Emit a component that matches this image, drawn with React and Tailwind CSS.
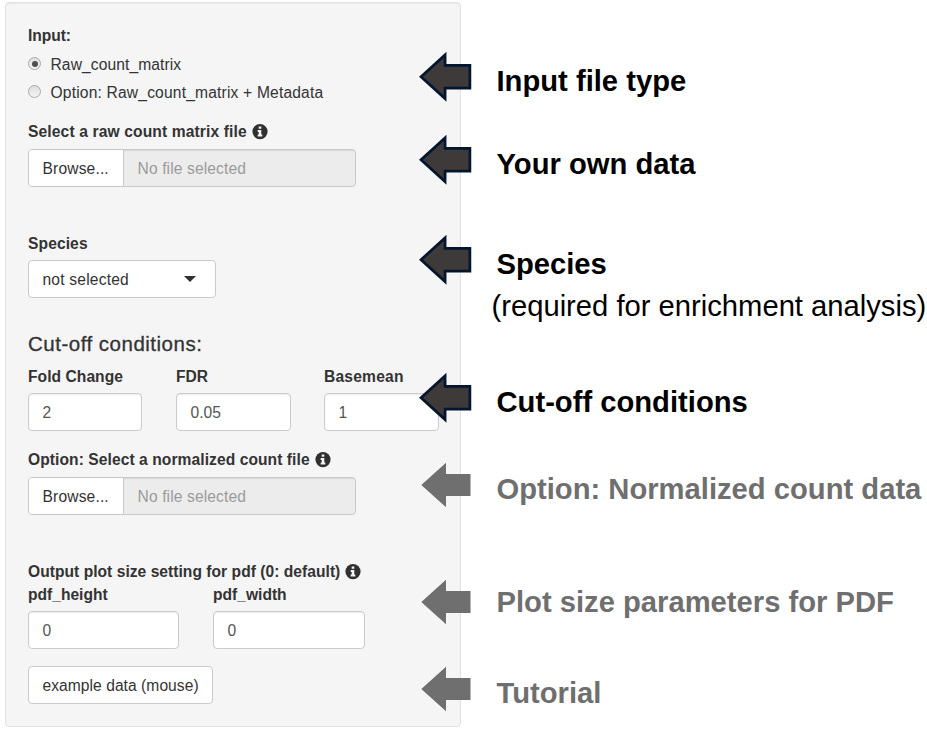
import React from "react";

function InfoIcon() {
  return (
    <svg width="16" height="16" viewBox="0 0 16 16" className="ml-[5px] inline-block shrink-0">
      <circle cx="8" cy="7.6" r="7.6" fill="#303030" />
      <path
        d="M6.7 2.5h2.6v2.3H6.7zM5.7 6h3.6v4.5h1v1.9H5.7v-1.9h1V7.9h-1z"
        fill="#f5f5f5"
      />
    </svg>
  );
}

function Label({ children, className = "" }) {
  return (
    <div className={`flex h-[22px] items-center whitespace-nowrap font-bold leading-[22px] ${className}`}>
      {children}
    </div>
  );
}

function Radio({ checked, children, className = "" }) {
  return (
    <label className={`flex h-[22px] items-start whitespace-nowrap leading-[22px] ${className}`}>
      <span className="mr-[9.5px] mt-[3px] flex size-[13px] items-center justify-center rounded-full border border-[#a9a9a9] bg-linear-to-b from-[#dedede] to-[#f4f4f4]">
        {checked && <span className="size-[6px] rounded-full bg-[#505050]" />}
      </span>
      {children}
    </label>
  );
}

function FileInput({ className = "" }) {
  return (
    <div
      className={`flex h-[38px] w-[328px] overflow-hidden rounded-[4px] border border-[#c8c8c8] bg-[#ececec] leading-[37px] ${className}`}
    >
      <button className="w-[95px] border-r border-[#c8c8c8] bg-white pl-[13.5px] text-left tracking-[0.15px]">
        Browse...
      </button>
      <span className="flex-1 pl-[13.5px] tracking-[0.12px] text-[#9b9b9b] shadow-[inset_0_1px_1px_rgba(0,0,0,0.08)]">
        No file selected
      </span>
    </div>
  );
}

function Field({ label, value, className = "", labelClass = "" }) {
  return (
    <div className={className}>
      <Label className={labelClass}>{label}</Label>
      <div className="mt-[5px] h-[38px] rounded-[4px] border border-[#cbcbcb] bg-white pl-[13.5px] leading-[37px] text-[#555] shadow-[inset_0_1px_1px_rgba(0,0,0,0.08)]">
        {value}
      </div>
    </div>
  );
}

function Arrow({ muted }) {
  return muted ? (
    <svg width="54" height="52" viewBox="0 0 54 52" className="shrink-0">
      <path d="M2.3 26 27 3.8V15h24.5v22H27v11.2z" fill="#6f6f6f" />
    </svg>
  ) : (
    <svg width="54" height="52" viewBox="0 0 54 52" className="shrink-0">
      <path
        d="M2 25.7 26.1 3.9v10.5h24.8v22.7H26.1v10.5z"
        fill="#3e3a39"
        stroke="#04162e"
        strokeWidth="2.7"
      />
    </svg>
  );
}

function Note({ muted, className = "", textClass = "mt-[13px]", children }) {
  return (
    <div className={`flex h-[52px] ${className}`}>
      <Arrow muted={muted} />
      <div
        className={`ml-[23.5px] whitespace-nowrap text-[29.2px] font-bold leading-[34px] ${textClass} ${
          muted ? "text-[#6f6f6f]" : "text-black"
        }`}
      >
        {children}
      </div>
    </div>
  );
}

export default function App() {
  return (
    <main className="flex h-[733px] w-[927px] items-start overflow-hidden bg-white pl-[5px] pt-[2px] font-['Liberation_Sans',Arial,sans-serif]">
      <section className="h-[725px] w-[456px] shrink-0 rounded-[4px] border border-[#e1e1e1] bg-[#f5f5f5] pl-[22px] pt-[22px] text-[15.6px] text-[#333] shadow-[inset_0_1px_1px_rgba(0,0,0,0.05)]">
        <Label className="tracking-[-0.05px]">Input:</Label>
        <Radio checked className="mt-[7px] tracking-[0.1px]">
          Raw_count_matrix
        </Radio>
        <Radio className="mt-[6px] tracking-[0.18px]">Option: Raw_count_matrix + Metadata</Radio>
        <Label className="mt-[17px] tracking-[0.13px]">
          Select a raw count matrix file
          <InfoIcon />
        </Label>
        <FileInput className="mt-[6px]" />

        <Label className="mt-[46px] tracking-[0.1px]">Species</Label>
        <div className="mt-[5px] flex h-[38px] w-[188px] justify-between rounded-[4px] border border-[#cbcbcb] bg-white pl-[13.5px] pr-[19px] leading-[38px] tracking-[0.2px]">
          not selected
          <svg width="12" height="6" viewBox="0 0 12 6" className="mt-[15px]">
            <path d="M0 0h12L6 6z" fill="#303030" />
          </svg>
        </div>

        <h4 className="mt-[32px] h-[28px] text-[20.5px] leading-[28px] tracking-[0.5px] [-webkit-text-stroke:0.3px_#333]">
          Cut-off conditions:
        </h4>
        <div className="mt-[8px] flex">
          <Field label="Fold Change" value="2" className="w-[114px]" labelClass="tracking-[0.05px]" />
          <Field label="FDR" value="0.05" className="ml-[34px] w-[115px]" />
          <Field label="Basemean" value="1" className="ml-[33px] w-[115px]" labelClass="tracking-[0.2px]" />
        </div>

        <Label className="mt-[18px] tracking-[0.07px]">
          Option: Select a normalized count file
          <InfoIcon />
        </Label>
        <FileInput className="mt-[6px]" />

        <Label className="mt-[46px] tracking-[0.03px]">
          Output plot size setting for pdf (0: default)
          <InfoIcon />
        </Label>
        <div className="mt-px flex">
          <Field label="pdf_height" value="0" className="w-[151px]" />
          <Field label="pdf_width" value="0" className="ml-[34px] w-[152px]" />
        </div>
        <button className="mt-[17px] block h-[38px] w-[185px] whitespace-nowrap rounded-[4px] border border-[#cbcbcb] bg-white pl-[13.5px] text-left leading-[37px] tracking-[0.05px]">
          example data (mouse)
        </button>
      </section>

      <section className="relative -ml-[42px] pt-[49px]">
        <Note>Input file type</Note>
        <Note className="mt-[31px]">Your own data</Note>
        <Note className="mt-[48px]">
          Species
          <div className="-ml-[5px] mt-[8px] font-normal">(required for enrichment analysis)</div>
        </Note>
        <Note className="mt-[86px]">Cut-off conditions</Note>
        <Note muted className="mt-[35px]">
          Option: Normalized count data
        </Note>
        <Note muted className="mt-[65px]" textClass="mt-[9px]">
          Plot size parameters for PDF
        </Note>
        <Note muted className="mt-[35px]">
          Tutorial
        </Note>
      </section>
    </main>
  );
}
